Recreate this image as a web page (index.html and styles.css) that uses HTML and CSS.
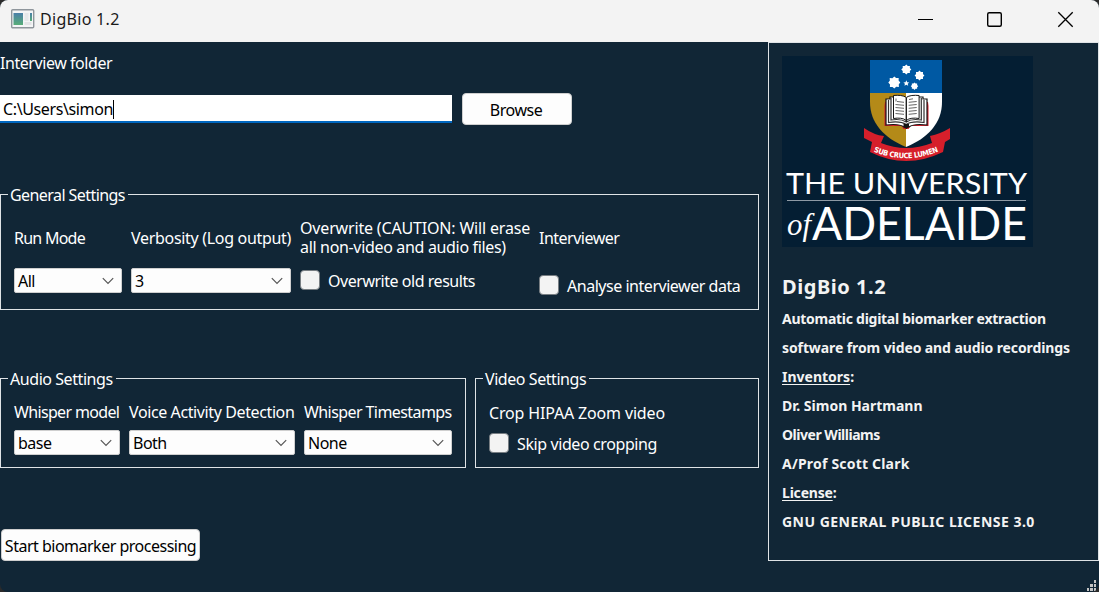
FILE: index.html
```html
<!DOCTYPE html>
<html lang="en">
<head>
<meta charset="utf-8">
<title>DigBio 1.2</title>
<link rel="stylesheet" href="styles.css">
</head>
<body>
<div class="window">
  <header class="titlebar">
    <svg class="app-icon" width="24" height="20" viewBox="0 0 24 20">
      <defs><linearGradient id="pane" x1="0" y1="0" x2="0" y2="1"><stop offset="0" stop-color="#4a7fa8"/><stop offset="1" stop-color="#58ad78"/></linearGradient></defs>
      <rect x=".7" y=".7" width="22" height="18" rx="1" fill="#f4f5f6" stroke="#8f969c" stroke-width="1.4"/>
      <rect x="2.500" y="4" width="9.500" height="12" fill="url(#pane)"/>
      <rect x="13.500" y="4" width="4" height="8" fill="#e6e8ea"/>
      <rect x="19" y="4" width="2" height="8" fill="url(#pane)"/>
      <rect x="13.500" y="13" width="7" height="3" fill="#e2e4e6"/>
    </svg>
    <span class="app-title">DigBio 1.2</span>
    <svg class="controls" width="174" height="42" viewBox="0 0 174 42" fill="none" stroke="#000">
      <path d="M8 19.5h15" stroke-width="1"/>
      <rect x="77.7" y="12.7" width="13.6" height="13.6" rx="1.5" stroke-width="1.4"/>
      <path d="M148.3 12.3l14.4 14.4M162.7 12.3l-14.4 14.4" stroke-width="1.3"/>
    </svg>
  </header>
  <div class="content">
    <main class="form">
      <label class="folder-label">Interview folder</label>
      <div class="path-row">
        <div class="path-input"><span>C:\Users\simon</span><i class="caret"></i></div>
        <button class="button browse">Browse</button>
      </div>
      <fieldset class="group general">
        <legend>General Settings</legend>
        <div class="field run">
          <label>Run Mode</label>
          <div class="select"><span>All</span><svg width="12" height="8" viewBox="0 0 12 8"><path d="M.8 1.2L6 6.4l5.2-5.2"/></svg></div>
        </div>
        <div class="field verbosity">
          <label>Verbosity (Log output)</label>
          <div class="select"><span>3</span><svg width="12" height="8" viewBox="0 0 12 8"><path d="M.8 1.2L6 6.4l5.2-5.2"/></svg></div>
        </div>
        <div class="field overwrite">
          <label class="two-line"><span class="caution">Overwrite (CAUTION: Will erase</span><br>all non-video and audio files)</label>
          <div class="check"><i class="box"></i><span>Overwrite old results</span></div>
        </div>
        <div class="field interviewer">
          <label>Interviewer</label>
          <div class="check"><i class="box"></i><span>Analyse interviewer data</span></div>
        </div>
      </fieldset>
      <div class="group-row">
        <fieldset class="group audio">
          <legend>Audio Settings</legend>
          <div class="field model">
            <label>Whisper model</label>
            <div class="select"><span>base</span><svg width="12" height="8" viewBox="0 0 12 8"><path d="M.8 1.2L6 6.4l5.2-5.2"/></svg></div>
          </div>
          <div class="field voice">
            <label>Voice Activity Detection</label>
            <div class="select"><span>Both</span><svg width="12" height="8" viewBox="0 0 12 8"><path d="M.8 1.2L6 6.4l5.2-5.2"/></svg></div>
          </div>
          <div class="field stamps">
            <label>Whisper Timestamps</label>
            <div class="select"><span>None</span><svg width="12" height="8" viewBox="0 0 12 8"><path d="M.8 1.2L6 6.4l5.2-5.2"/></svg></div>
          </div>
        </fieldset>
        <fieldset class="group video">
          <legend>Video Settings</legend>
          <div class="field crop">
            <label>Crop HIPAA Zoom video</label>
            <div class="check"><i class="box"></i><span>Skip video cropping</span></div>
          </div>
        </fieldset>
      </div>
      <button class="button start">Start biomarker processing</button>
    </main>
    <aside class="about">
      <svg class="logo" width="251" height="191" viewBox="0 0 251 191">
        <rect width="251" height="191" fill="#041e33"/>
        <clipPath id="shield"><path d="M88 4h72v42c0 21-14 36-36 45-22-9-36-24-36-45z"/></clipPath>
        <g clip-path="url(#shield)">
          <rect x="88" y="4" width="72" height="34" fill="#0059a3"/>
          <rect x="88" y="37" width="36" height="60" fill="#b48a18"/>
          <rect x="124" y="37" width="36" height="60" fill="#fff"/>
        </g>
        <g fill="#fff">
          <path transform="translate(124.300 13.500) scale(.84)" d="M0-6l1.800 1.800 2.500-.1-.1 2.500L6 0 4.200 1.800l.1 2.500-2.500-.1L0 6l-1.800-1.800-2.500.1.100-2.500L-6 0l1.800-1.800-.1-2.500 2.500.1z"/>
          <path transform="translate(137.500 19.500) scale(.82)" d="M0-6l1.800 1.800 2.500-.1-.1 2.500L6 0 4.200 1.800l.1 2.500-2.500-.1L0 6l-1.800-1.800-2.500.1.100-2.500L-6 0l1.800-1.800-.1-2.500 2.500.1z"/>
          <path transform="translate(112.300 26.500)" d="M0-6l1.800 1.500 2.600-.1-.1 2.700L6 0 4.500 1.800l.1 2.600-2.700-.1L0 6l-1.800-1.500-2.600.1.100-2.700L-6 0l1.500-1.800-.1-2.600 2.700.1z"/>
          <path transform="translate(132.500 30.200) scale(.62)" d="M0-6l1.800 1.800 2.500-.1-.1 2.500L6 0 4.200 1.800l.1 2.500-2.500-.1L0 6l-1.800-1.800-2.500.1.100-2.500L-6 0l1.800-1.800-.1-2.500 2.500.1z"/>
          <path d="M124.300 24.300l.9 1.900 2.100.2-1.600 1.400.5 2-1.900-1-1.800 1 .4-2-1.500-1.400 2.100-.2z"/>
        </g>
        <path d="M103 46h43l.500 4v20h-18l-2 3h-5l-2-3h-17V50z" fill="#d61f2b"/>
        <path d="M104 43h4v-2h3c5-1 10-1 13 1 3-2 8-2 13-1h4v2h4v26c-8-1-14-1-18 2h-5c-4-3-10-3-18-2z" fill="#fff" stroke="#151515" stroke-width="1.200"/>
        <path d="M106.500 44v22.500c7-1 13-1 17.800 2 4.500-3 10.500-3 17.700-2V44M109 42v22c6-1 11-.8 15.300 2 4-2.800 9-3 15-2V42" fill="none" stroke="#333" stroke-width="1.200"/>
        <path d="M111.500 39.500c5-.5 10-.2 12.800 2 2.800-2.200 7.800-2.500 12.800-2v23c-5-.8-10-.5-12.800 2-2.800-2.500-7.800-2.800-12.800-2z" fill="#fff" stroke="#151515"/>
        <path d="M124.300 42v24" stroke="#222" stroke-width="1.400"/>
        <path d="M114 42.500v3m1 0l7 .8m-8.500 2.200l8.500.8m-8.500 2.200l8.500.8m-8.500 2.200l8.500.8m-8.500 2.200l8.500.8M126.700 46.300l8-.8m-8 3.800l8-.8m-8 3.800l8-.8m-8 3.800l8-.8m-8 3.800l8-.8M127 43.500l4-.7" fill="none" stroke="#555" stroke-width=".9"/>
        <path d="M121.500 68h5.500v3l-2.700 2-2.800-2z" fill="#151515"/>
        <path d="M82 72q10 7 20 8l-3 7q25 10 51 0l-2-7q10-2 20-8v11l-5 3-2 10q-37 18-73 0l2-10-8-4z" fill="#d61f2b"/>
        <path id="motto" d="M90.500 95Q124.500 110 160 94" fill="none"/>
        <text class="motto"><textPath href="#motto" startOffset="1" textLength="67">SUB CRUCE LUMEN</textPath></text>
        <text class="uni" x="4" y="138" textLength="241" lengthAdjust="spacingAndGlyphs">THE UNIVERSITY</text>
        <path d="M5 144.500h239" stroke="#8e9aa5"/>
        <text class="of" x="5" y="179" textLength="24" lengthAdjust="spacingAndGlyphs">of</text>
        <text class="adelaide" x="30" y="183.500" textLength="215" lengthAdjust="spacingAndGlyphs">ADELAIDE</text>
      </svg>
      <h1>DigBio 1.2</h1>
      <p class="summary">Automatic digital biomarker extraction</p>
      <p class="summary-more">software from video and audio recordings</p>
      <p><u>Inventors</u>:</p>
      <p>Dr. Simon Hartmann</p>
      <p class="williams">Oliver Williams</p>
      <p class="clark">A/Prof Scott Clark</p>
      <p class="license"><u>License</u>:</p>
      <p class="gpl">GNU GENERAL PUBLIC LICENSE 3.0</p>
    </aside>
  </div>
  <svg class="grip" width="10" height="11" viewBox="0 0 10 11" fill="#c4c4c4"><path d="M7 0h2v3H7zM3 4h3v3H3zM7 4h2v3H7zM0 8h2v3H0zM3 8h3v3H3zM7 8h2v3H7z"/></svg>
</div>
</body>
</html>
```
FILE: styles.css
```css
* { box-sizing: border-box; }
body { margin: 0; background: #2b2b2b; font: 16px/21px "Noto Sans", sans-serif; color: #fff; }
.window { position: relative; width: 1099px; height: 592px; background: #112636; border-radius: 8px; overflow: hidden; }
.titlebar { display: flex; height: 42px; background: #f3f3f3; color: #1a1a1a; padding-left: 11px; }
.app-icon { margin-top: 9px; }
.app-title { margin: 9px 0 0 5px; letter-spacing: .3px; }
.controls { margin-left: auto; margin-right: 15px; }
.content { display: flex; justify-content: space-between; }
.form { display: flex; flex-direction: column; align-items: flex-start; width: 759px; padding-top: 11px; white-space: nowrap; letter-spacing: -.5px; }
.folder-label { letter-spacing: -.44px; }
.path-row { display: flex; align-items: center; gap: 10px; margin-top: 19px; }
.path-input { display: flex; align-items: center; width: 452px; height: 28px; padding: 3px 0 0 3px; background: #fff; border-bottom: 2px solid #0067c0; color: #000; letter-spacing: -.38px; }
.caret { width: 1px; height: 19px; background: #000; }
.button { height: 32px; padding: 2px 0 0; border: 1px solid #cfcfcf; border-radius: 4px; background: #fdfdfd; color: #000; font: inherit; letter-spacing: inherit; white-space: nowrap; }
.browse { width: 110px; padding-right: 2px; }
.group { display: flex; margin: 0; padding: 0 0 0 13px; min-width: 0; border: 1px solid #dfe3e6; }
.group legend { height: 21px; padding: 0 3px 0 2px; margin-left: -6px; line-height: 23px; }
.field { display: flex; flex-direction: column; align-items: flex-start; }
.select { display: flex; align-items: center; justify-content: space-between; width: 100%; height: 25px; padding: 1px 7px 0 3px; background: #fdfdfd; border: 1px solid #cfcfcf; border-radius: 2px; color: #000; }
.select path { fill: none; stroke: #555; stroke-width: 1.2; }
.check { display: flex; gap: 8px; }
.check span { padding-top: 1px; letter-spacing: -.47px; }
.box { width: 20px; height: 20px; background: #f3f3f3; border: 1px solid #777d82; border-radius: 4px; }
.general { width: 759px; height: 126px; margin-top: 59px; }
.general legend { letter-spacing: -.57px; }
.general .field { padding-top: 23px; }
.general .select { margin-top: 19px; }
.run { width: 108px; margin-right: 9px; }
.run label { letter-spacing: -.75px; }
.verbosity { width: 160px; margin-right: 9px; }
.verbosity label { letter-spacing: -.31px; }
.overwrite { width: 239px; }
.general .overwrite { padding-top: 14px; }
.two-line { line-height: 19px; letter-spacing: -.33px; }
.caution { letter-spacing: -.17px; }
.overwrite .check { margin-top: 13px; }
.interviewer .check { margin-top: 26px; }
.group-row { display: flex; gap: 9px; margin-top: 58px; }
.group-row legend { letter-spacing: -.44px; }
.audio { width: 466px; height: 100px; }
.audio .field { padding-top: 13px; }
.audio .select { margin-top: 7px; }
.model { width: 106px; margin-right: 9px; }
.model label { letter-spacing: -.66px; }
.voice { width: 166px; margin-right: 9px; }
.voice label { letter-spacing: -.39px; }
.stamps { width: 148px; }
.stamps label { letter-spacing: -.58px; }
.video { width: 284px; height: 100px; }
.crop { padding-top: 14px; }
.crop label { letter-spacing: -.16px; }
.crop .check { margin-top: 9px; }
.crop .check span { letter-spacing: -.4px; }
.start { width: 199px; margin: 61px 0 0 1px; }
.about { width: 331px; height: 519px; border: 1px solid #dfe3e6; padding: 13px 0 0 13px; font-weight: 700; font-size: 14px; color: #f3f3f3; white-space: nowrap; }
.logo { display: block; overflow: visible; }
.about h1 { margin: 28px 0 5px; font-size: 20px; line-height: 24px; letter-spacing: .55px; }
.about p { margin: 0; line-height: 29px; }
.about u { text-underline-offset: 2px; text-decoration-thickness: 1px; text-decoration-skip-ink: none; }
.about .summary { letter-spacing: -.27px; }
.about .summary-more { letter-spacing: -.1px; }
.about .williams { letter-spacing: -.48px; }
.about .clark { letter-spacing: .2px; }
.about .license { letter-spacing: -.2px; }
.about .gpl { letter-spacing: .48px; }
.motto { font: 700 7.5px "Liberation Sans Narrow", "DejaVu Sans Condensed", sans-serif; fill: #fff; }
.uni { font: 400 29px Lato, sans-serif; fill: #fff; }
.of { font: italic 400 32px "Liberation Serif", serif; fill: #fff; }
.adelaide { font: 400 46px Lato, sans-serif; fill: #fff; }
.grip { position: absolute; right: 2px; bottom: 1px; }
```
